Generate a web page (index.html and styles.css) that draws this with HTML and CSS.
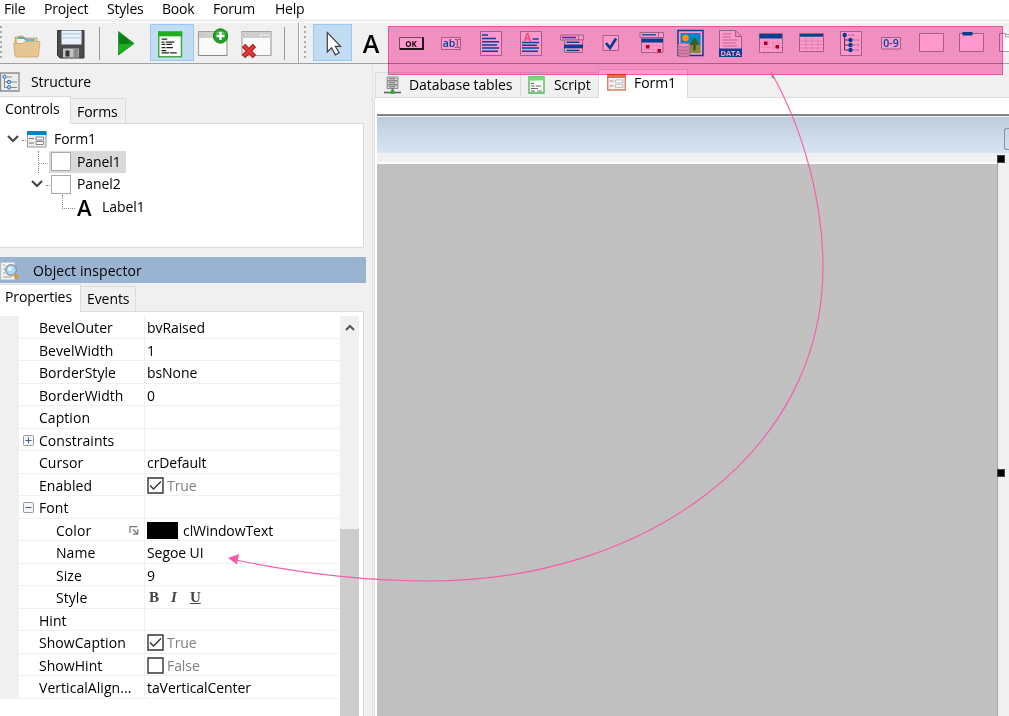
FILE: index.html
```html
<!DOCTYPE html>
<html lang="en">
<head>
    <meta charset="UTF-8">
    <title>Form designer</title>
    <link rel="stylesheet" href="styles.css">
</head>
<body>

<div class="menubar">
    <span class="m-file">File</span>
    <span class="m-project">Project</span>
    <span class="m-styles">Styles</span>
    <span class="m-book">Book</span>
    <span class="m-forum">Forum</span>
    <span>Help</span>
</div>

<div class="toolbar">
    <div class="tools">
        <div class="grip first"></div>
        <!-- open -->
        <svg class="tool open" width="44" height="41" viewBox="0 0 44 41">
            <path d="M10 14h3l1-1h4l1 2h13v17H10z" fill="#d9b67e" stroke="#c09a62" stroke-width=".7"/>
            <path d="M12 16h19v6H12z" fill="#f4f2ea"/>
            <path d="M13 15h6l2 2h9" fill="none" stroke="#38a7cc" stroke-width="1.4"/>
            <path d="M8.500 20.500h9l2-2h15.500l-1.500 14q0 1.500-1.500 1.500H11.500q-1 0-1.200-1.300z" fill="#e6c691" stroke="#cba469" stroke-width=".8"/>
        </svg>
        <!-- save -->
        <svg class="tool" width="44" height="41" viewBox="0 0 44 41">
            <path d="M8.500 7.500h26.500v27.500H11l-2.500-2.500z" fill="#4b4b4e" stroke="#37373a"/>
            <path d="M12.500 7.500h20v14h-20z" fill="#e9f1fa"/>
            <path d="M12.500 10h20v1.500h-20zM12.500 14h20v1.500h-20z" fill="#bfd2e6"/>
            <path d="M14 25.500h16v9H14z" fill="#c4c4c4"/>
            <path d="M16.500 27.500h4v6h-4z" fill="#333"/>
            <path d="M24.500 26h5v8.500h-5z" fill="#8a8a8a"/>
        </svg>
        <div class="sep edge"></div>
        <!-- run -->
        <svg class="tool" width="50" height="41" viewBox="0 0 50 41">
            <defs>
                <linearGradient id="play" x1="0" y1="0" x2="1" y2="1">
                    <stop offset="0" stop-color="#0b8a1c"/>
                    <stop offset=".5" stop-color="#087a10"/>
                    <stop offset="1" stop-color="#35c83c"/>
                </linearGradient>
            </defs>
            <path d="M18.500 8.500 34 20.500 18.500 32z" fill="url(#play)" stroke="#2c9a36"/>
            <path d="M19 21h14L19 31z" fill="#1cb01f"/>
        </svg>
        <!-- script view -->
        <svg class="tool on" width="44" height="37" viewBox="0 0 44 37">
            <path d="M8 7.500h24v26H8z" fill="#fff" stroke="#43ad3d" stroke-width="1.600"/>
            <path d="M7.200 7h25.600v5H7.200z" fill="#1fae1c"/>
            <path d="M11 15h6M11 18h3M15.500 18h9M11 20.500h4M16 20.500h6M11 24h4M16 24h7M11 27h5M11 29.500h8M20 29.500h7" stroke="#222" stroke-width="1.300"/>
        </svg>
        <!-- add form -->
        <svg class="tool" width="42" height="41" viewBox="0 0 42 41">
            <path d="M4.500 8.500h28.500v24H4.500z" fill="#fafafa" stroke="#a2a2a2" stroke-width="1.200"/>
            <path d="M5 9h27.500v6H5z" fill="#cfcfcf"/>
            <circle cx="8" cy="12" r="1.300" fill="#fff" stroke="#999" stroke-width=".6"/>
            <path d="M5 32.500h28" stroke="#888"/>
            <circle cx="26.500" cy="13" r="7.200" fill="#22a02a" stroke="#1b8220"/>
            <path d="M21.500 10.500a6 5 0 0 1 10 0" fill="#6fcf6a"/>
            <path d="M26.500 9v8M22.500 13h8" stroke="#fff" stroke-width="2.300"/>
        </svg>
        <!-- delete form -->
        <svg class="tool" width="48" height="41" viewBox="0 0 48 41">
            <path d="M6 8.500h29v24H6z" fill="#fafafa" stroke="#a2a2a2" stroke-width="1.200"/>
            <path d="M6.500 9h28v6h-28z" fill="#cfcfcf"/>
            <circle cx="9.500" cy="12" r="1.300" fill="#fff" stroke="#999" stroke-width=".6"/>
            <path d="M24 12h9" stroke="#f5f5f5" stroke-width="1.500" stroke-dasharray="2 1.500"/>
            <path d="m7.500 22.500 11 11M18.500 22.500l-11 11" stroke="#a81414" stroke-width="4.600"/>
            <path d="m8 23 10 10M18 23 8 33" stroke="#e13a35" stroke-width="2.800"/>
        </svg>
        <div class="sep"></div>
    </div>
    <div class="palette">
        <div class="grip"></div>
        <svg class="cell on" width="39" height="37" viewBox="0 0 39 37">
            <path d="M14 8v20.500l4.500-4.500 4 7.500 4-2.200-4-6.800h5.500z" fill="#fff" stroke="#433f49" stroke-width="1.300"/>
        </svg>
        <div class="cell letter">A</div>
        <!-- button -->
        <svg class="cell" viewBox="0 0 40 41">
            <path d="M8.500 14.500h24v12h-24z" fill="#fff" stroke="#767676"/>
            <path d="M9 26h23V14.500" fill="none" stroke="#222" stroke-width="2"/>
            <text x="20" y="23.500" class="tiny ok">OK</text>
        </svg>
        <!-- edit -->
        <svg class="cell" viewBox="0 0 40 41">
            <path d="M10.500 14.500h19v12h-19z" fill="#fff" stroke="#a2a2a2"/>
            <text x="18" y="24.300" class="tiny edit">ab</text>
            <path d="M24 16.500h1.500l.8.700.7-.700h1.500M26.300 17v7M24 24.500h1.500l.8-.700.7.700h1.500" stroke="#757575" fill="none"/>
        </svg>
        <!-- memo -->
        <svg class="cell" viewBox="0 0 40 41">
            <path d="M9.500 8.500h21v24h-21z" fill="#fff" stroke="#a2a2a2"/>
            <path d="M11 12h6M11 15.500h14M11 18.800h17M11 22h15M11 25h17M11 28.300h16" stroke="#0075c2" stroke-width="1.500"/>
        </svg>
        <!-- rich edit -->
        <svg class="cell" viewBox="0 0 40 41">
            <path d="M9.500 8.500h21v24h-21z" fill="#fff" stroke="#a2a2a2"/>
            <text x="16.500" y="18" class="tiny rich">A</text>
            <path d="M21.500 16h6M11 19.500h17M11 22.300h15M11 25h17M11 28.300h16" stroke="#0075c2" stroke-width="1.500"/>
        </svg>
        <!-- combo box -->
        <svg class="cell" viewBox="0 0 40 41">
            <path d="M9.500 12h23v5h-23z" fill="#fff" stroke="#a2a2a2"/>
            <path d="M27.500 12v5" stroke="#a2a2a2"/>
            <path d="M13.500 17h18v12.500h-18z" fill="#fff" stroke="#a2a2a2"/>
            <path d="M13 21.500h19v3.800H13z" fill="#006ab5"/>
            <path d="M11 14.500h14M15.500 19.300h13M15.500 27.500h13" stroke="#0075c2" stroke-width="1.400"/>
        </svg>
        <!-- check box -->
        <svg class="cell" viewBox="0 0 40 41">
            <path d="M12 12.500h15.500v15H12z" fill="#fff" stroke="#a2a2a2"/>
            <path d="m15 20 4 5 6-9.500" fill="none" stroke="#006ab5" stroke-width="2.700"/>
        </svg>
        <!-- date picker -->
        <svg class="cell" viewBox="0 0 40 41">
            <path d="M9 9.500h23.500v5H9zM27.500 9.500v5" fill="#fff" stroke="#a2a2a2"/>
            <path d="M10.500 14.500h21.500v15H10.500z" fill="#fff" stroke="#a2a2a2"/>
            <path d="M11 11.800h14" stroke="#0075c2" stroke-width="1.300"/>
            <path d="M10.500 15.500h21.500v4H10.500z" fill="#006ab5"/>
            <path d="M14 20v9M18 20v9M22 20v9M26 20v9M11 23h21M11 26.500h21" stroke="#eaeaea"/>
            <path d="M15 22h3.500v3.500H15zM26.500 26h3.500v3.500h-3.500z" fill="#b0001c"/>
        </svg>
        <!-- db image -->
        <svg class="cell" viewBox="0 0 40 41">
            <path d="M7 7.500h25v25H7z" fill="#fff" stroke="#006ab5" stroke-width="1.500"/>
            <path d="M9.500 10h20v12h-20z" fill="#00e4ff"/>
            <path d="M9.500 22h20v8h-20z" fill="#79f050"/>
            <circle cx="14.500" cy="15" r="3.300" fill="#fff000"/>
            <path d="M23.500 21.500v6" stroke="#704012" stroke-width="2"/>
            <path d="m23.500 14 5 8h-10z" fill="#3ba020"/>
            <path d="M7 22v9.500c0 3 12 3 12 0V22" fill="#d4d4d4" stroke="#a8a8a8" stroke-width=".8"/>
            <ellipse cx="13" cy="22" rx="6" ry="2" fill="#f2f2f2" stroke="#a8a8a8" stroke-width=".8"/>
            <path d="M7 25.500c0 3 12 3 12 0M7 28.500c0 3 12 3 12 0" fill="none" stroke="#a8a8a8" stroke-width=".8"/>
        </svg>
        <!-- data file -->
        <svg class="cell" viewBox="0 0 40 41">
            <path d="M8.500 7.500h16l6 6v20h-22zM24.500 7.500v6h6" fill="#fff" stroke="#a2a2a2"/>
            <path d="M11.500 11h9M11.500 14h8M11.500 17h15M11.500 20h13M11.500 23h15" stroke="#b5b5b5"/>
            <path d="M8 25.500h23V34H8z" fill="#006ab5"/>
            <text x="19.500" y="32.500" class="tiny data">DATA</text>
        </svg>
        <!-- calendar -->
        <svg class="cell" viewBox="0 0 40 41">
            <path d="M8.500 10.500h23v19h-23z" fill="#fff" stroke="#a2a2a2"/>
            <path d="M8.500 11h22.500v4.500H8.500z" fill="#006ab5"/>
            <path d="M13 16v13M17 16v13M22 16v13M27 16v13M9 20h22M9 24.500h22" stroke="#eaeaea"/>
            <path d="M13 18.500h3.500V22H13zM24.500 22H28v3.500h-3.500z" fill="#b0001c"/>
        </svg>
        <!-- grid -->
        <svg class="cell" viewBox="0 0 40 41">
            <path d="M8.500 10.500h24v18h-24z" fill="#fff" stroke="#a2a2a2"/>
            <path d="M15 14v14M21 14v14M27 14v14M9 18h23M9 21.500h23M9 25h23" stroke="#dcdcdc"/>
            <path d="M9 11h23v2.700H9z" fill="#006ab5"/>
        </svg>
        <!-- tree view -->
        <svg class="cell" viewBox="0 0 40 41">
            <path d="M9.500 8.500h21v24h-21z" fill="#fff" stroke="#a2a2a2"/>
            <path d="M13.500 12v15H20M13.500 17H20M13.500 22H20" fill="none" stroke="#555"/>
            <path d="M17 12h7M22 17h7M22 22h7M22 27h7" stroke="#9a9a9a" stroke-dasharray="2.500 1"/>
            <g fill="#006ab5"><circle cx="13.700" cy="12" r="2.200"/><circle cx="19.500" cy="17" r="2.200"/><circle cx="19.500" cy="22" r="2.200"/><circle cx="19.500" cy="27" r="2.200"/></g>
        </svg>
        <!-- spin -->
        <svg class="cell" viewBox="0 0 40 41">
            <path d="M10.500 14.500h19v11.500h-19z" fill="#fff" stroke="#a2a2a2"/>
            <text x="20" y="24" class="tiny edit">0-9</text>
        </svg>
        <!-- panel -->
        <svg class="cell" viewBox="0 0 40 41">
            <path d="M8.500 10.500h24v18h-24z" fill="#fff" stroke="#a2a2a2"/>
        </svg>
        <!-- group box -->
        <svg class="cell" viewBox="0 0 40 41">
            <path d="M8.500 10.500h24v18h-24z" fill="#fff" stroke="#a2a2a2"/>
            <path d="M11.500 9h10v3.500h-10z" fill="#006ab5"/>
        </svg>
        <!-- page control -->
        <svg class="cell" viewBox="0 0 40 41">
            <path d="M8.500 10.500h6v3.500h18v14.500h-24z" fill="#fff" stroke="#a2a2a2"/>
            <path d="M14.500 11.500h10V14" fill="none" stroke="#a2a2a2"/>
        </svg>
    </div>
</div>

<div class="workspace">
    <div class="side">
        <div class="title">
            <svg width="20" height="20" viewBox="0 0 20 20">
                <path d="M.5 1h18.500v18H.5z" fill="#ececec" stroke="#8d8d8d" stroke-width="1.300"/>
                <path d="M4.500 5v10.500H8M4.500 10H8M7 5h5M11 10h6M11 15.500h6" fill="none" stroke="#888"/>
                <g fill="#a9cdf0" stroke="#3579b8"><circle cx="4.500" cy="4.800" r="1.700"/><circle cx="9" cy="10" r="1.700"/><circle cx="9" cy="15.300" r="1.700"/></g>
            </svg>
            <span>Structure</span>
        </div>
        <div class="tabs">
            <div class="tab active t-controls">Controls</div>
            <div class="tab t-forms">Forms</div>
        </div>
        <div class="tree">
            <div class="node l0">
                <svg class="chevron" width="12" height="8" viewBox="0 0 12 8"><path d="m1 1 5 5 5-5"/></svg>
                <i class="dots"></i>
                <svg width="20" height="17" viewBox="0 0 20 17">
                    <path d="M.5 1h18.500v15H.5z" fill="#eee" stroke="#999"/>
                    <path d="M0 0h19.500v4H0z" fill="#0585bd"/>
                    <path d="M2 7.500h5M2 12h5" stroke="#777"/>
                    <path d="M9 6h7.500v3H9zM9 10.500h7.500v3H9z" fill="#fff" stroke="#888"/>
                </svg>
                <span>Form1</span>
            </div>
            <div class="node l1">
                <i class="branch"></i>
                <div class="selected"><b class="box"></b><span>Panel1</span></div>
            </div>
            <div class="node l1b">
                <svg class="chevron" width="12" height="8" viewBox="0 0 12 8"><path d="m1 1 5 5 5-5"/></svg>
                <i class="dots"></i>
                <b class="box"></b><span>Panel2</span>
            </div>
            <div class="node l2">
                <i class="corner"></i>
                <em>A</em><span>Label1</span>
            </div>
        </div>

        <div class="title inspector">
            <svg width="20" height="20" viewBox="0 0 20 20">
                <path d="M1 1.500h13.500v17H1z" fill="#f5f5f5" stroke="#d0d0d0"/>
                <path d="M3 4h2M3 8h2M3 12h2M3 16h9" stroke="#9a9a9a"/>
                <circle cx="11" cy="9" r="5.300" fill="#a8dbf5" stroke="#8a98a5" stroke-width="1.500"/>
                <circle cx="10" cy="8" r="2" fill="#e8f8ff"/>
                <path d="m15.500 14.500 1.500 2" stroke="#d49a4c" stroke-width="4" stroke-linecap="round"/>
            </svg>
            <span>Object inspector</span>
        </div>
        <div class="tabs">
            <div class="tab active t-props">Properties</div>
            <div class="tab t-events">Events</div>
        </div>
        <div class="props">
            <div class="grid">
                <div class="row"><div class="name">BevelOuter</div><div class="value">bvRaised</div></div>
                <div class="row"><div class="name">BevelWidth</div><div class="value">1</div></div>
                <div class="row"><div class="name">BorderStyle</div><div class="value">bsNone</div></div>
                <div class="row"><div class="name">BorderWidth</div><div class="value">0</div></div>
                <div class="row"><div class="name">Caption</div><div class="value"></div></div>
                <div class="row"><div class="name group"><svg class="expand" width="11" height="11" viewBox="0 0 11 11"><rect x=".5" y=".5" width="10" height="10" rx="1"/><path d="M2.500 5.500h6M5.500 2.500v6"/></svg>Constraints</div><div class="value"></div></div>
                <div class="row"><div class="name">Cursor</div><div class="value">crDefault</div></div>
                <div class="row"><div class="name">Enabled</div><div class="value muted"><svg class="check" width="17" height="17" viewBox="0 0 17 17"><path d="M1 1h15v15H1z"/><path d="m3 8.500 3.500 3.500L14 4.500"/></svg>True</div></div>
                <div class="row"><div class="name group"><svg class="expand" width="11" height="11" viewBox="0 0 11 11"><rect x=".5" y=".5" width="10" height="10" rx="1"/><path d="M2.500 5.500h6"/></svg>Font</div><div class="value"></div></div>
                <div class="row"><div class="name sub">Color<svg class="more" width="10" height="9" viewBox="0 0 10 9"><path d="M1 7V.7h7.500M4 3.500l4 4M8.700 3v5.200H4" fill="none" stroke="#777" stroke-width="1.200"/></svg></div><div class="value"><b class="swatch"></b>clWindowText</div></div>
                <div class="row"><div class="name sub">Name</div><div class="value">Segoe UI</div></div>
                <div class="row"><div class="name sub">Size</div><div class="value">9</div></div>
                <div class="row"><div class="name sub">Style</div><div class="value biu"><b>B</b><i>I</i><u>U</u></div></div>
                <div class="row"><div class="name">Hint</div><div class="value"></div></div>
                <div class="row"><div class="name">ShowCaption</div><div class="value muted"><svg class="check" width="17" height="17" viewBox="0 0 17 17"><path d="M1 1h15v15H1z"/><path d="m3 8.500 3.500 3.500L14 4.500"/></svg>True</div></div>
                <div class="row"><div class="name">ShowHint</div><div class="value muted"><svg class="check" width="17" height="17" viewBox="0 0 17 17"><path d="M1 1h15v15H1z"/></svg>False</div></div>
                <div class="row"><div class="name">VerticalAlign...</div><div class="value">taVerticalCenter</div></div>
            </div>
            <div class="scrollbar">
                <svg width="10" height="7" viewBox="0 0 10 7"><path d="m1 6 4-4 4 4" fill="none" stroke="#555" stroke-width="2"/></svg>
                <div class="thumb"></div>
            </div>
        </div>
    </div>

    <div class="editor">
        <div class="doctabs">
            <div class="doctab d-db">
                <svg width="17" height="19" viewBox="0 0 17 19">
                    <path d="M3 1h11v3.500H3zM3 5h11v3.500H3zM3 9h11v3.500H3z" fill="#c9cdd0" stroke="#888" stroke-width=".9"/>
                    <path d="M5 2.800h6M5 6.800h6M5 10.800h6" stroke="#777"/>
                    <path d="M0 16.500h17" stroke="#666" stroke-width="1.600"/>
                    <path d="M8.500 12.500v3" stroke="#666" stroke-width="2"/>
                    <path d="M6.500 14.500h4v3.500h-4z" fill="#2bb32f"/>
                </svg>
                <span>Database tables</span>
            </div>
            <div class="doctab d-script">
                <svg width="17" height="18" viewBox="0 0 17 18">
                    <path d="M1 1h15v16H1z" fill="#f8fff8" stroke="#4bb553" stroke-width="1.300"/>
                    <path d="M1 1h15v3.500H1z" fill="#6ddc71"/>
                    <path d="M3 7.500h3M3 10h4M8 10h5M3 12.500h7M3 15h4M9 15h5" stroke="#666" stroke-width="1.200"/>
                </svg>
                <span>Script</span>
            </div>
            <div class="doctab active d-form">
                <svg width="19" height="17" viewBox="0 0 19 17">
                    <path d="M.7 1h17.600v15H.7z" fill="#f6eeee" stroke="#cf8260" stroke-width="1.300"/>
                    <path d="M0 0h19v4H0z" fill="#e17347"/>
                    <path d="M2.500 7h4M2.500 12h4" stroke="#c98770" stroke-width="1.200"/>
                    <path d="M8.500 6h7.500v2.800H8.500zM8.500 10.800h7.500v2.500H8.500z" fill="#fff" stroke="#bbb"/>
                </svg>
                <span>Form1</span>
            </div>
        </div>
        <div class="page">
            <div class="form">
                <div class="caption"><div class="sysbtn"></div></div>
                <div class="client">
                    <div class="panel"></div>
                    <div class="handle top"></div>
                    <div class="handle mid"></div>
                </div>
            </div>
        </div>
    </div>
</div>

<div class="highlight"></div>
<svg class="arrow" width="1009" height="716" viewBox="0 0 1009 716">
    <path d="M771 72C806 134 823 207 823 267C823 455 642 581 430 581C362 581 298 573 236 560" fill="none" stroke="#fa5aaa" stroke-width="1.100"/>
    <path d="m771 75 2-1 2 5-3-1z" fill="#fa5aaa"/>
    <path d="m228 558 11-4-2 10.500z" fill="#fa5aaa"/>
</svg>

</body>
</html>
```
FILE: styles.css
```css
* {
    box-sizing: border-box;
}
body {
    margin: 0;
    height: 716px;
    overflow: hidden;
    position: relative;
    display: flex;
    flex-direction: column;
    background: #f0f0f0;
    color: #000;
    font-family: "Open Sans", "Noto Sans", sans-serif;
    font-size: 14px;
    letter-spacing: -0.08px;
    line-height: 18px;
    white-space: nowrap;
}
svg {
    display: block;
    flex: none;
}

/* menu */
.menubar {
    display: flex;
    height: 19px;
    padding-left: 4px;
    background: #fff;
    letter-spacing: -0.2px;
}
.m-file { width: 40px; }
.m-project { width: 63px; }
.m-styles { width: 55px; }
.m-book { width: 51px; }
.m-forum { width: 62px; }

/* toolbar */
.toolbar {
    display: flex;
    height: 45px;
    padding-top: 3px;
    border-bottom: 1px solid #a0a0a0;
}
.tools,
.palette {
    display: flex;
    flex: none;
    height: 41px;
    border-top: 1px solid #fff;
}
.tools {
    width: 299px;
    border-right: 1px solid #a8a8a8;
}
.palette {
    width: 710px;
    overflow: hidden;
    border-left: 1px solid #fff;
}
.grip {
    flex: none;
    width: 3px;
    height: 33px;
    margin: 3px 6px 0 4px;
    background: radial-gradient(circle at 1px 1px, #aaa 1px, transparent 1.5px) 0 0 / 3px 5px;
}
.grip.first {
    margin: 3px 2px 0 0;
}
.sep {
    flex: none;
    width: 1px;
    height: 33px;
    margin-top: 4px;
    background: #999;
}
.sep.edge {
    margin-left: 6px;
}
.tool.on,
.cell.on {
    background: #c2dcf3;
    border: 1px solid #97c9f2;
}
.tool.on {
    height: 37px;
    margin-top: 1px;
}
.cell {
    flex: none;
    width: 40px;
    height: 41px;
}
.cell.on {
    width: 39px;
    height: 37px;
    margin-top: 1px;
}
.letter {
    margin-left: -1px;
    font-size: 25px;
    font-weight: 600;
    line-height: 41px;
    text-align: center;
}
.tiny {
    font-weight: 700;
    text-anchor: middle;
    letter-spacing: 0;
}
.ok { font-size: 8px; fill: #111; }
.edit { font-size: 10.5px; font-weight: 600; fill: #0075c2; }
.rich { font-size: 10px; fill: #ff6f7e; }
.data { font-size: 7.5px; fill: #fff; }

/* docked panels */
.workspace {
    display: flex;
    flex: 1;
    min-height: 0;
}
.side {
    flex: none;
    width: 372px;
}
.title {
    display: flex;
    align-items: center;
    height: 32px;
    padding-top: 4px;
    gap: 11px;
}
.inspector {
    width: 366px;
    height: 26px;
    margin-top: 9px;
    padding-top: 1px;
    gap: 13px;
    background: #9ab3d0;
    letter-spacing: 0.1px;
}
.tabs {
    display: flex;
    align-items: flex-end;
    width: 364px;
    height: 28px;
    box-shadow: inset 0 -1px #dcdcdc;
}
.inspector + .tabs {
    height: 29px;
}
.tab {
    height: 26px;
    padding: 4px 0 0 6px;
    border: 1px solid #dcdcdc;
    border-left: 0;
}
.tab.active {
    height: 28px;
    padding: 3px 0 0 5px;
    background: #fff;
    border-bottom: 0;
}
.t-controls { width: 71px; }
.t-forms { width: 55px; }
.t-props { width: 81px; }
.t-events { width: 55px; }
.t-events.tab { padding-top: 3px; }

.tree {
    width: 364px;
    height: 124px;
    padding-top: 4px;
    background: #fff;
    border-right: 1px solid #dcdcdc;
    border-bottom: 1px solid #dcdcdc;
}
.node {
    display: flex;
    align-items: center;
    height: 22.5px;
}
.chevron path {
    fill: none;
    stroke: #484848;
    stroke-width: 2.2;
}
.dots {
    width: 4px;
    margin: 3px 1px 0 3px;
    border-top: 1px dotted #888;
}
.l0 { padding-left: 7px; }
.l0 span { margin-left: 7px; }
.l1 { padding-left: 38px; }
.l1b { padding-left: 31px; }
.l2 { padding-left: 62px; }
.branch {
    align-self: stretch;
    width: 12px;
    border-left: 1px dotted #888;
    background: linear-gradient(90deg, #aaa 50%, transparent 50%) 0 12px / 2px 1px repeat-x;
}
.corner {
    width: 13px;
    height: 14px;
    margin-bottom: 9px;
    border-left: 1px dotted #888;
    border-bottom: 1px dotted #888;
}
.selected {
    display: flex;
    align-items: center;
    width: 77px;
    height: 22px;
    margin-left: -1px;
    padding-left: 2px;
    background: #d9d9d9;
}
.box {
    width: 20px;
    height: 19px;
    background: #fff;
    border: 1px solid #aaa;
}
.box + span { margin-left: 6px; }
.l2 em {
    width: 18px;
    margin: 0 7px 0 2px;
    font-size: 22px;
    font-style: normal;
    font-weight: 600;
}

/* property grid */
.props {
    display: flex;
    width: 364px;
    height: 404px;
    padding-top: 4px;
    background: #fff;
    border-right: 1px solid #dcdcdc;
}
.grid {
    width: 340px;
    height: 383px;
    padding: 0 1px 0 19px;
    background: linear-gradient(90deg, #f0f0f0 19px, #fff 19px);
}
.row {
    display: flex;
    height: 22.5px;
    border-bottom: 1px solid #f0f0f0;
    line-height: 21px;
}
.name {
    display: flex;
    align-items: center;
    width: 126px;
    padding: 2px 5px 0 20px;
    border-right: 1px solid #f0f0f0;
    letter-spacing: 0.05px;
}
.name.group { padding-left: 4px; }
.name.sub { padding-left: 37px; }
.value {
    display: flex;
    align-items: center;
    padding: 2px 0 0 2px;
}
.muted { color: #808080; }
.expand {
    margin-right: 5px;
    fill: #f5f5f5;
    stroke: #999;
}
.expand path { stroke: #3c5aa5; }
.more { margin-left: auto; }
.check {
    margin-right: 3px;
    fill: none;
    stroke: #333;
    stroke-width: 1.4;
}
.swatch {
    width: 31px;
    height: 17px;
    margin-right: 5px;
    background: #000;
}
.biu {
    padding-left: 4px;
    color: #444;
    font-family: "Liberation Serif", serif;
    font-size: 15px;
    font-weight: 700;
}
.biu b { width: 22px; }
.biu i { width: 19px; }
.scrollbar {
    display: flex;
    flex-direction: column;
    align-items: center;
    width: 19px;
    padding-top: 8px;
    background: #f0f0f0;
}
.thumb {
    width: 19px;
    flex: 1;
    margin-top: 198px;
    background: #cdcdcd;
}

/* document area */
.editor {
    display: flex;
    flex-direction: column;
    flex: 1;
    padding-left: 1px;
    border-left: 1px solid #e3e3e3;
}
.doctabs {
    display: flex;
    align-items: flex-end;
    height: 34px;
    padding-left: 1px;
    box-shadow: inset 0 -1px #dcdcdc;
}
.doctab {
    display: flex;
    align-items: center;
    height: 26px;
    border: 1px solid #dcdcdc;
    border-right: 0;
}
.doctab.active {
    height: 29px;
    background: #fff;
    border: 1px solid #dcdcdc;
    border-bottom: 0;
}
.d-db { width: 145px; padding-left: 8px; gap: 8px; }
.d-script { width: 78px; padding-left: 7px; gap: 9px; }
.d-form { width: 90px; padding: 0 0 3px 8px; gap: 8px; }
.page {
    flex: 1;
    padding: 16px 0 0 2px;
    background: #fff;
    border-left: 1px solid #e3e3e3;
}
.form {
    display: flex;
    flex-direction: column;
    height: 602px;
    border-top: 2px solid #808387;
    background: #f0f0f0;
}
.caption {
    display: flex;
    justify-content: flex-end;
    height: 37px;
    padding-top: 11px;
    border-top: 1px solid #eef2f6;
    background: linear-gradient(#bfcddb, #d7e4f2);
}
.sysbtn {
    width: 5px;
    height: 22px;
    border: 1px solid #8493aa;
    border-right: 0;
    border-radius: 3px 0 0 3px;
}
.client {
    position: relative;
    flex: 1;
    padding-top: 9px;
}
.panel {
    width: 621px;
    height: 554px;
    background: #c0c0c0;
    border-top: 2px solid #fff;
    border-right: 1px solid #a5a5a5;
}
.handle {
    position: absolute;
    left: 620px;
    width: 8px;
    height: 8px;
    background: #000;
    border: 1px solid #444;
}
.handle.top { top: 2px; }
.handle.mid { top: 316px; }

/* annotation */
.highlight {
    position: absolute;
    left: 388px;
    top: 26px;
    width: 615px;
    height: 49px;
    background: #ff98cc;
    border: 1px solid #fa5aaa;
    mix-blend-mode: multiply;
}
.arrow {
    position: absolute;
    left: 0;
    top: 0;
}
```
